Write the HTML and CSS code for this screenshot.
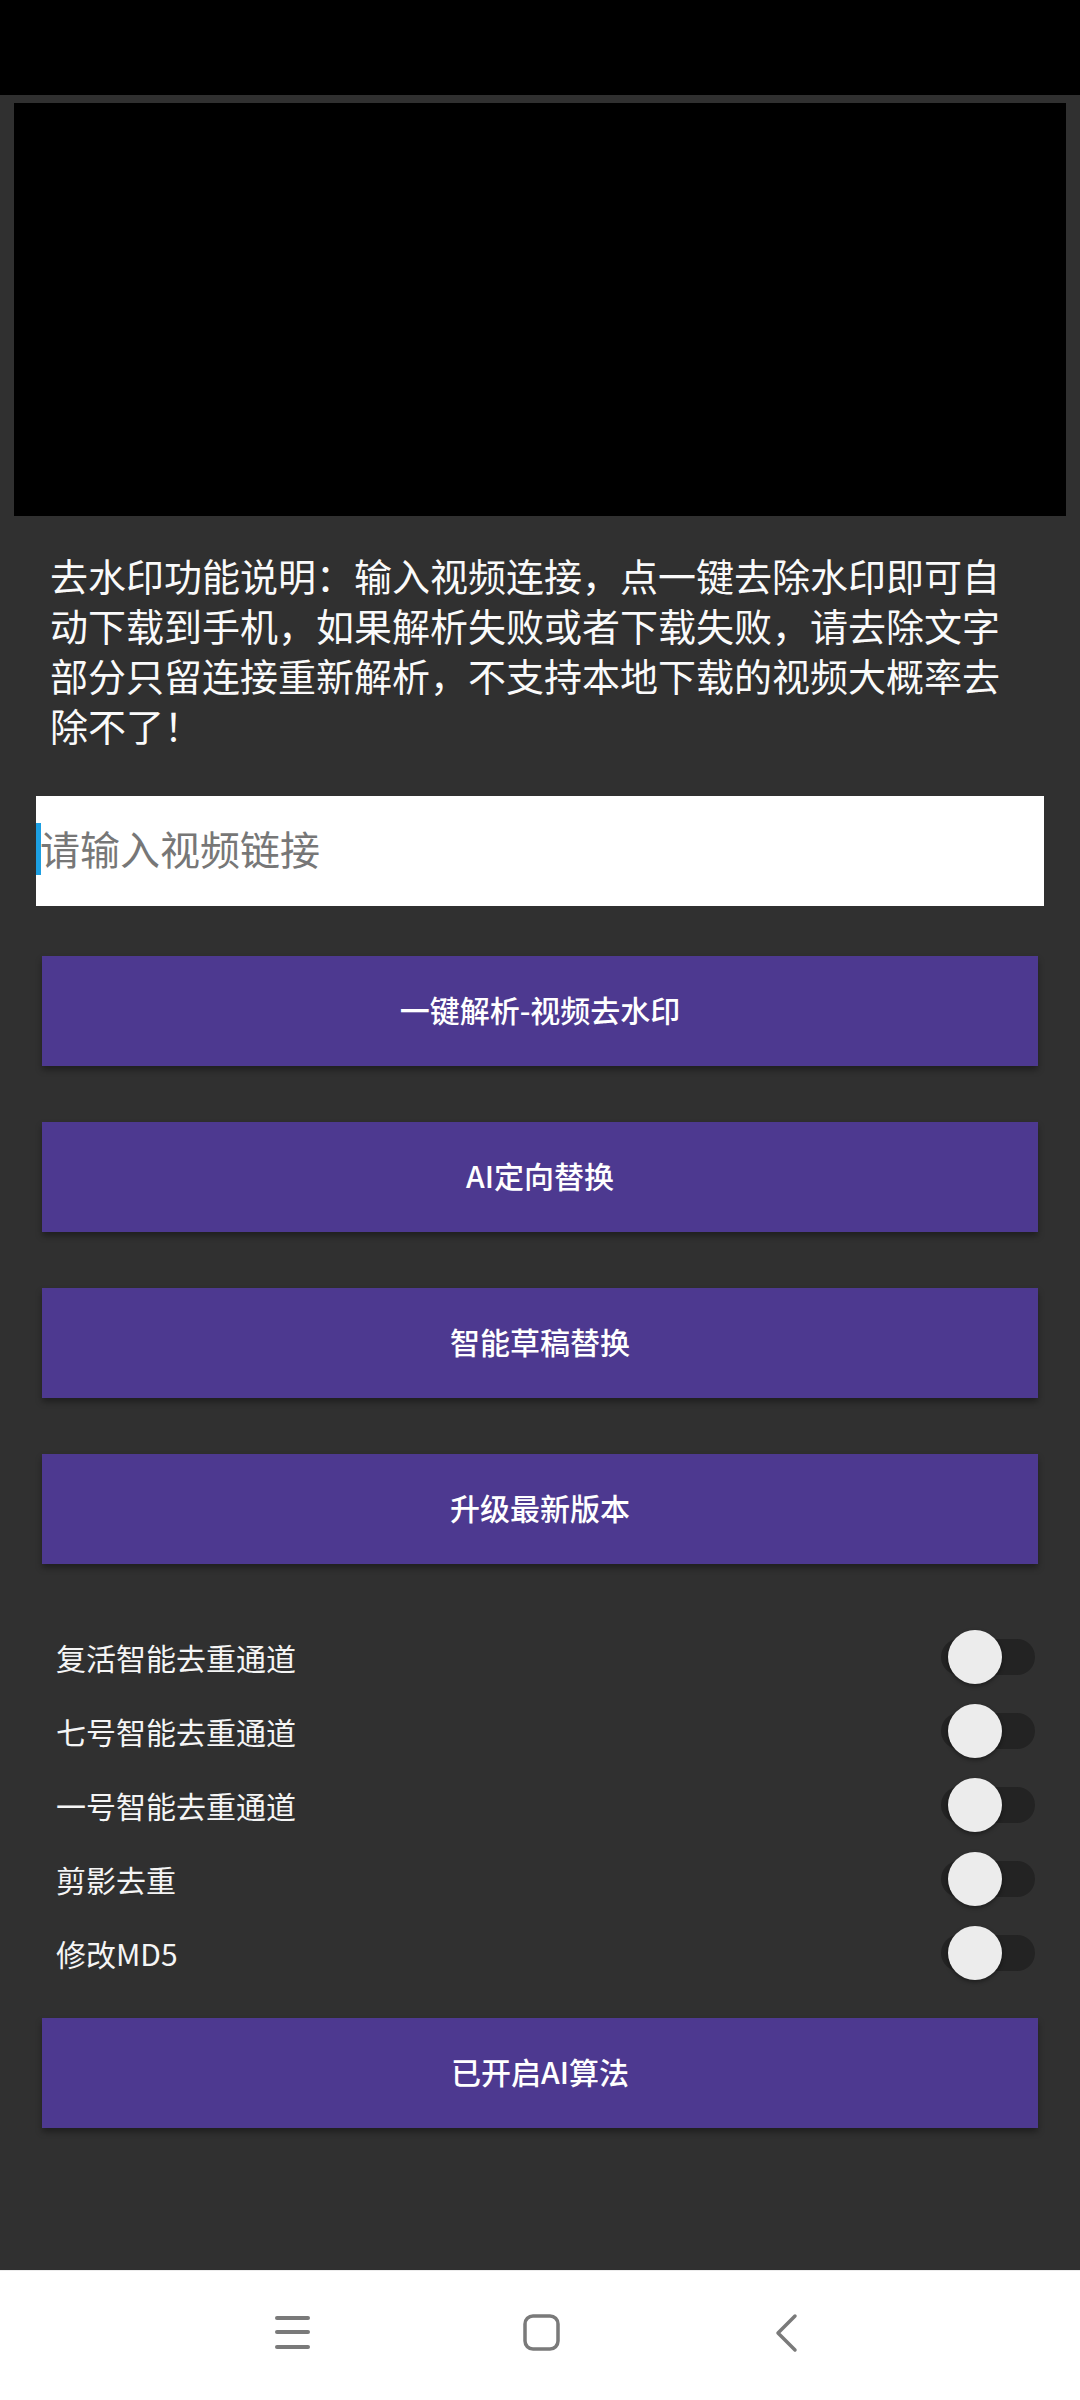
FILE: index.html
```html
<!DOCTYPE html>
<html lang="zh-CN">
<head>
<meta charset="utf-8">
<title>去水印</title>
<link rel="stylesheet" href="styles.css">
</head>
<body>
<div class="screen">
  <div class="statusbar"></div>
  <main class="content">
    <div class="video"></div>
    <p class="desc">去水印功能说明：输入视频连接，点一键去除水印即可自动下载到手机，如果解析失败或者下载失败，请去除文字部分只留连接重新解析，不支持本地下载的视频大概率去除不了！</p>
    <div class="input"><span class="placeholder">请输入视频链接</span></div>
    <div class="buttons">
      <button class="btn">一键解析-视频去水印</button>
      <button class="btn">AI定向替换</button>
      <button class="btn">智能草稿替换</button>
      <button class="btn">升级最新版本</button>
    </div>
    <ul class="switches">
      <li class="row"><span class="label">复活智能去重通道</span><span class="switch"><span class="thumb"></span></span></li>
      <li class="row"><span class="label">七号智能去重通道</span><span class="switch"><span class="thumb"></span></span></li>
      <li class="row"><span class="label">一号智能去重通道</span><span class="switch"><span class="thumb"></span></span></li>
      <li class="row"><span class="label">剪影去重</span><span class="switch"><span class="thumb"></span></span></li>
      <li class="row"><span class="label">修改MD5</span><span class="switch"><span class="thumb"></span></span></li>
    </ul>
    <button class="btn btn-last">已开启AI算法</button>
  </main>
  <nav class="navbar">
    <svg class="nav-icon" width="40" height="40" viewBox="0 0 40 40">
      <g stroke="#7a7a7a" stroke-width="4" stroke-linecap="round" fill="none">
        <line x1="4" y1="5" x2="35" y2="5"/>
        <line x1="4" y1="19" x2="35" y2="19"/>
        <line x1="4" y1="34" x2="35" y2="34"/>
      </g>
    </svg>
    <svg class="nav-icon" width="40" height="40" viewBox="0 0 40 40">
      <rect x="4" y="3" width="33" height="33" rx="8" ry="8" stroke="#7a7a7a" stroke-width="3.5" fill="none"/>
    </svg>
    <svg class="nav-icon" width="40" height="40" viewBox="0 0 40 40">
      <polyline points="26,3 9,20 26,37" stroke="#7a7a7a" stroke-width="3.5" stroke-linecap="round" stroke-linejoin="round" fill="none"/>
    </svg>
  </nav>
</div>
</body>
</html>
```
FILE: styles.css
```css
* { box-sizing: border-box; }
html, body {
  margin: 0;
  padding: 0;
  background: #303030;
}
body {
  font-family: "Noto Sans CJK SC", "Noto Sans", sans-serif;
  color: #ffffff;
}
.screen {
  width: 1080px;
  height: 2400px;
  display: flex;
  flex-direction: column;
  background: #303030;
  overflow: hidden;
}
.statusbar {
  height: 95px;
  background: #000;
  flex: none;
}
.content {
  flex: 1;
  display: flex;
  flex-direction: column;
  padding-top: 8px;
}
.video {
  height: 413px;
  margin: 0 14px;
  background: #000;
  flex: none;
}
.desc {
  margin: 34px 0 4px 50px;
  width: 970px;
  font-size: 38px;
  line-height: 50px;
  color: #fafafa;
}
.input {
  position: relative;
  margin: 42px 36px 0 36px;
  height: 110px;
  background: #fff;
  display: flex;
  align-items: center;
  padding-left: 4px;
}
.input::before {
  content: "";
  position: absolute;
  left: 0;
  top: 27px;
  width: 5px;
  height: 52px;
  background: #1c9fe2;
}
.placeholder {
  font-size: 40px;
  color: #777777;
  line-height: 1;
  margin-top: -6px;
}
.buttons {
  display: flex;
  flex-direction: column;
  gap: 56px;
  margin: 50px 42px 0 42px;
}
.btn {
  display: block;
  width: 996px;
  height: 110px;
  border: 0;
  background: #4d3990;
  color: #fff;
  font-family: "Noto Sans CJK SC", "Noto Sans", sans-serif;
  font-size: 30px;
  font-weight: 500;
  box-shadow: 0 4px 6px rgba(0, 0, 0, 0.35);
  padding: 0 0 4px 0;
}
.switches {
  list-style: none;
  margin: 56px 0 0 0;
  padding: 0 45px 0 56px;
}
.row {
  height: 74px;
  display: flex;
  align-items: center;
  justify-content: space-between;
}
.label {
  font-size: 30px;
  color: #f5f5f5;
}
.switch {
  position: relative;
  width: 94px;
  height: 36px;
  border-radius: 18px;
  background: #232323;
}
.thumb {
  position: absolute;
  left: 7px;
  top: -9px;
  width: 54px;
  height: 54px;
  border-radius: 50%;
  background: #ececec;
  box-shadow: 0 2px 4px rgba(0, 0, 0, 0.4);
}
.btn-last {
  margin: 28px 0 0 42px;
}
.navbar {
  height: 130px;
  flex: none;
  background: #fff;
  border-top: 1px solid #ececec;
  display: flex;
  align-items: center;
  padding-left: 273px;
  gap: 208px;
  padding-bottom: 6px;
}
.nav-icon {
  display: block;
}
```
